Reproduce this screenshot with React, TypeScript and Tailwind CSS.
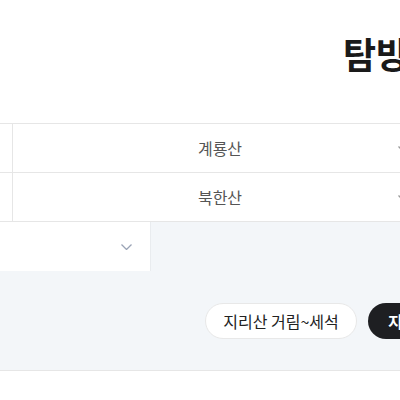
const FONT = "font-['Noto_Sans_CJK_KR','Noto_Sans',sans-serif]";

function Chevron({ className }: { className?: string }) {
  return (
    <svg className={className} width="11" height="6" viewBox="0 0 11 6" fill="none">
      <path d="M0.5 0.5L5.5 5.5L10.5 0.5" stroke="currentColor" strokeWidth="1.3" />
    </svg>
  );
}

const ROWS = ["계룡산", "북한산"];

export default function App() {
  return (
    <div className={`w-[400px] h-[400px] overflow-hidden bg-white ${FONT}`}>
      {/* Title */}
      <div className="h-[123px] flex pl-[343px] pt-[31px]">
        <h1 className="text-[36px] leading-[44px] font-bold text-[#1a1a1a] whitespace-nowrap">탐방로</h1>
      </div>

      {/* Table rows */}
      <div className="border-t border-[#e6e6e6] w-[600px]">
        {ROWS.map((name) => (
          <div key={name} className="flex h-[49px] border-b border-[#e6e6e6]">
            <div className="w-[13px] border-r border-[#e6e6e6]" />
            <div className="relative w-[414px] flex items-center justify-center">
              <span className="text-[16px] text-[#555]">{name}</span>
              <Chevron className="absolute left-[385px] top-[22px] text-[#999]" />
            </div>
          </div>
        ))}
      </div>

      {/* Filter area */}
      <div className="bg-[#f3f6f9] h-[149px] border-b border-[#e6e6e6]">
        <div className="w-[151px] h-[49px] bg-white border-r border-[#e9ecef] flex items-center justify-end pr-[18px]">
          <Chevron className="text-[#9aa3b5]" />
        </div>
        <div className="flex gap-[11px] pl-[205px] pt-[32px] whitespace-nowrap">
          <button className="w-[152px] h-[36px] rounded-full bg-white border border-[#e8e8e8] text-[16px] text-[#222] shrink-0 flex items-center justify-center">
            지리산 거림~세석
          </button>
          <button className="h-[36px] px-[20px] rounded-full bg-[#1e1f22] text-[16px] font-bold text-white shrink-0">
            지리산 중산리~천왕봉
          </button>
        </div>
      </div>
    </div>
  );
}
